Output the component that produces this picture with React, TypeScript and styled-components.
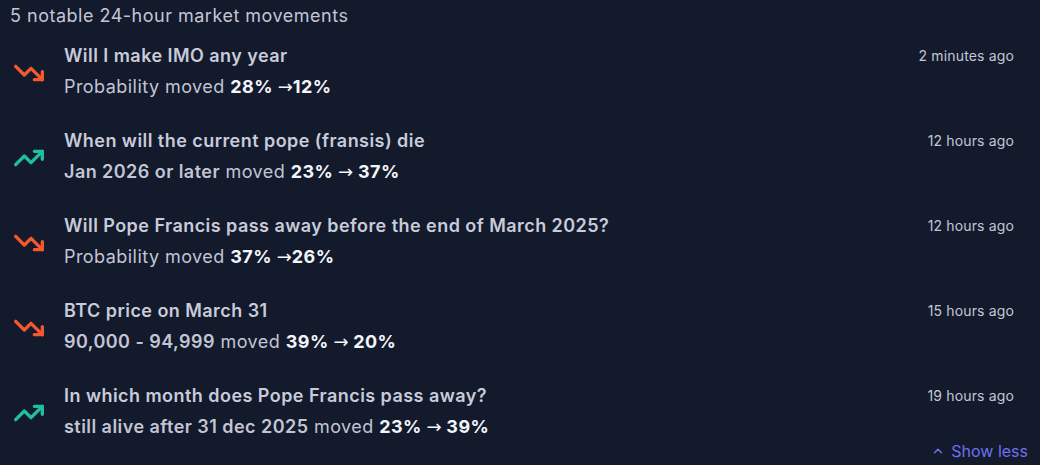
import styled, { createGlobalStyle } from "styled-components";
import { TrendingDown, TrendingUp, ChevronUp } from "lucide-react";

const GlobalStyle = createGlobalStyle`
  body {
    margin: 0;
    background: #121a2c;
    font-family: Inter, "Noto Sans", sans-serif;
  }
`;

const Panel = styled.section`
  width: 1040px;
  height: 465px;
  box-sizing: border-box;
  padding: 2px 12px 0 10px;
  background: #121a2c;
  color: #c6c8d8;
  overflow: hidden;
`;

const Heading = styled.h2`
  margin: 0;
  font-size: 18px;
  font-weight: 400;
  line-height: 28px;
  letter-spacing: 0.5px;
  color: #c3c6d6;
`;

const List = styled.ul`
  list-style: none;
  margin: 0;
  padding: 0;
  display: flex;
  flex-direction: column;
  gap: 14px;
`;

const Row = styled.li`
  display: grid;
  grid-template-columns: 54px 1fr auto;
  align-items: center;
  padding-top: 12px;
  padding-right: 14px;
`;

const IconCell = styled.div<{ $up: boolean }>`
  display: flex;
  align-items: center;
  padding-left: 3px;
  padding-top: 3px;
  color: ${({ $up }) => ($up ? "#1fbf9f" : "#f4582e")};
`;

const Body = styled.div`
  display: flex;
  flex-direction: column;
  gap: 3px;
  letter-spacing: 0.45px;
`;

const Title = styled.div`
  font-size: 18px;
  font-weight: 600;
  line-height: 28px;
  color: #c9cbdb;
`;

const Change = styled.div`
  font-size: 18px;
  font-weight: 400;
  line-height: 28px;
  color: #c3c5d5;
`;

const Answer = styled.span`
  font-weight: 600;
`;

const Nums = styled.b`
  font-weight: 700;
  color: #f4f5fa;
`;

const Arrow = styled.span`
  font-family: "DejaVu Sans", sans-serif;
  font-weight: 400;
  letter-spacing: 0;
`;

const Time = styled.span`
  align-self: start;
  font-size: 14px;
  line-height: 28px;
  letter-spacing: 0.15px;
  color: #c3c6d6;
`;

const Footer = styled.div`
  display: flex;
  justify-content: flex-end;
`;

const ShowLess = styled.button`
  display: flex;
  align-items: center;
  gap: 6px;
  border: none;
  background: none;
  padding: 0;
  font-family: inherit;
  font-size: 16px;
  line-height: 20px;
  color: #6f6ff2;
  cursor: pointer;
`;

type Movement = {
  title: string;
  answer?: string;
  from: string;
  to: string;
  spaced: boolean;
  time: string;
  up: boolean;
};

const movements: Movement[] = [
  { title: "Will I make IMO any year", from: "28%", to: "12%", spaced: false, time: "2 minutes ago", up: false },
  { title: "When will the current pope (fransis) die", answer: "Jan 2026 or later", from: "23%", to: "37%", spaced: true, time: "12 hours ago", up: true },
  { title: "Will Pope Francis pass away before the end of March 2025?", from: "37%", to: "26%", spaced: false, time: "12 hours ago", up: false },
  { title: "BTC price on March 31", answer: "90,000 - 94,999", from: "39%", to: "20%", spaced: true, time: "15 hours ago", up: false },
  { title: "In which month does Pope Francis pass away?", answer: "still alive after 31 dec 2025", from: "23%", to: "39%", spaced: true, time: "19 hours ago", up: true },
];

export default function App() {
  return (
    <>
      <GlobalStyle />
      <Panel>
        <Heading>5 notable 24-hour market movements</Heading>
        <List>
          {movements.map((m) => (
            <Row key={m.title}>
              <IconCell $up={m.up}>
                {m.up ? <TrendingUp size={32} strokeWidth={2.5} /> : <TrendingDown size={32} strokeWidth={2.5} />}
              </IconCell>
              <Body>
                <Title>{m.title}</Title>
                <Change>
                  {m.answer ? <Answer>{m.answer}</Answer> : "Probability"} moved{" "}
                  <Nums>
                    {m.from} <Arrow>→</Arrow>
                    {m.spaced ? " " : ""}
                    {m.to}
                  </Nums>
                </Change>
              </Body>
              <Time>{m.time}</Time>
            </Row>
          ))}
        </List>
        <Footer>
          <ShowLess>
            <ChevronUp size={14} strokeWidth={2.5} />
            Show less
          </ShowLess>
        </Footer>
      </Panel>
    </>
  );
}
